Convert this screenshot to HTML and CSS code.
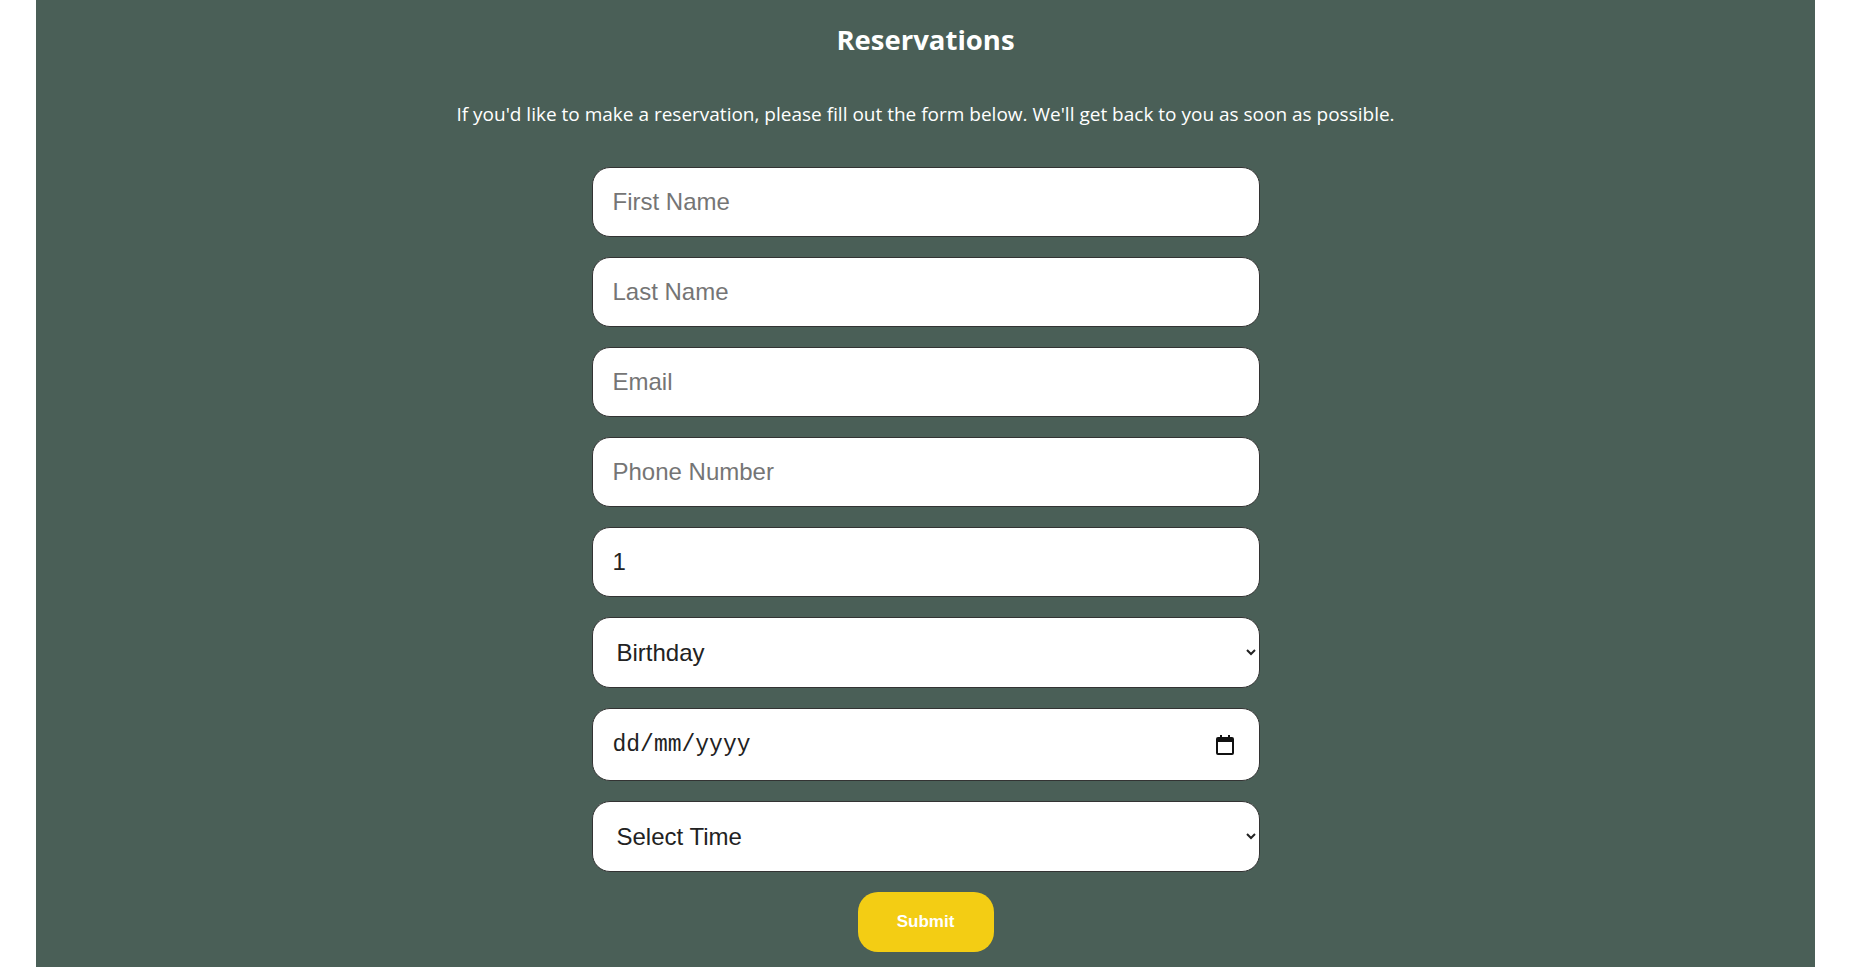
FILE: index.html
```html
<!DOCTYPE html>
<html lang="en">
<head>
<meta charset="utf-8">
<title>Reservations</title>
<link rel="stylesheet" href="styles.css">
</head>
<body>
<main class="page">
  <h2 class="title">Reservations</h2>
  <p class="intro">If you'd like to make a reservation, please fill out the form below. We'll get back to you as soon as possible.</p>
  <form class="form">
    <input class="field" type="text" placeholder="First Name">
    <input class="field" type="text" placeholder="Last Name">
    <input class="field" type="text" placeholder="Email">
    <input class="field" type="text" placeholder="Phone Number">
    <input class="field" type="text" value="1">
    <select class="field select">
      <option>Birthday</option>
      <option>Anniversary</option>
      <option>Other</option>
    </select>
    <div class="field date">
      <span class="date-text">dd/mm/yyyy</span>
      <svg class="cal" width="18" height="20" viewBox="0 0 18 20" aria-hidden="true">
        <path d="M4 0h2v2h6V0h2v2h2a2 2 0 0 1 2 2v14a2 2 0 0 1-2 2H2a2 2 0 0 1-2-2V4a2 2 0 0 1 2-2h2z M2 7v11h14V7z" fill="#111" fill-rule="evenodd"/>
      </svg>
    </div>
    <select class="field select">
      <option>Select Time</option>
      <option>6:00 PM</option>
      <option>7:00 PM</option>
    </select>
    <button class="submit" type="button">Submit</button>
  </form>
</main>
</body>
</html>
```
FILE: styles.css
```css
html, body {
  margin: 0;
  padding: 0;
  background: #ffffff;
}

.page {
  margin: 0 42px 0 36px;
  min-height: 967px;
  background: #4a5f57;
  display: flex;
  flex-direction: column;
  align-items: center;
  padding-top: 22px;
  box-sizing: border-box;
  font-family: "Open Sans", "Noto Sans", sans-serif;
  color: #ffffff;
}

.title {
  margin: 0;
  font-size: 27.5px;
  line-height: 36px;
  font-weight: 700;
}

.intro {
  margin: 43px 0 0;
  font-size: 19px;
  line-height: 26px;
}

.form {
  margin-top: 40px;
  width: 668px;
  display: flex;
  flex-direction: column;
  align-items: center;
  gap: 20px;
}

.field {
  width: 100%;
  height: 70px;
  box-sizing: border-box;
  border: 1px solid #333333;
  border-radius: 18px;
  background: #ffffff;
  padding: 0 20px;
  font-family: "Liberation Sans", Arial, sans-serif;
  font-size: 24px;
  color: #222222;
  outline: none;
}

.field::placeholder {
  color: #757575;
}

.select {
  height: 71px;
}

.date {
  height: 73px;
  display: flex;
  align-items: center;
  justify-content: space-between;
  padding-right: 25px;
}

.date-text {
  font-family: "Liberation Mono", "DejaVu Sans Mono", monospace;
  font-size: 23px;
  color: #222222;
}

.cal {
  display: block;
}

.submit {
  width: 136px;
  height: 60px;
  border: none;
  border-radius: 20px;
  background: #f3cd14;
  color: #ffffff;
  font-family: "Liberation Sans", Arial, sans-serif;
  font-weight: 700;
  font-size: 17px;
  cursor: pointer;
}
```
